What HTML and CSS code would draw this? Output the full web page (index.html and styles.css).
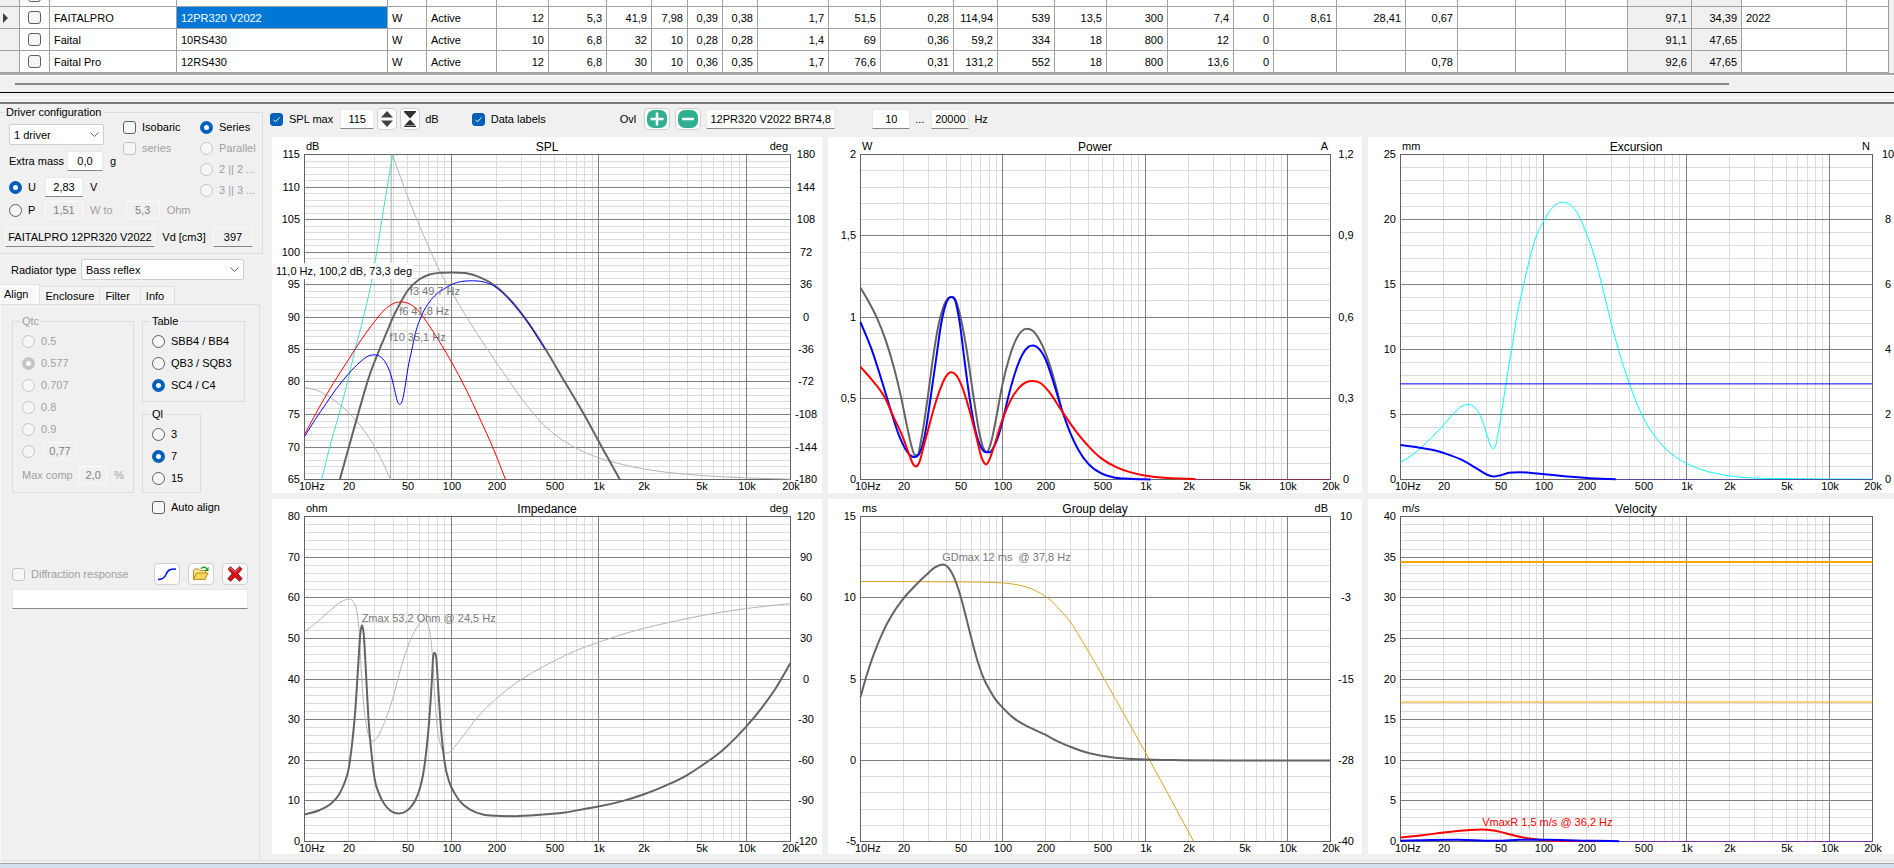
FILE: index.html
```html
<!DOCTYPE html>
<html lang="en">
<head>
    <meta charset="UTF-8">
    <meta name="viewport" content="width=device-width, initial-scale=1.0">
    <title>Speaker Box Simulator</title>
    <link rel="stylesheet" href="styles.css">
</head>
<body>

    <div class="driver-list">
        <table class="drivers">
            <colgroup id="driver-cols"><col><col><col><col><col><col><col><col><col><col><col><col><col><col><col><col><col><col><col><col><col><col><col><col><col><col><col><col><col><col><col></colgroup>
            <tbody id="driver-rows"></tbody>
        </table>
    </div>
    <div class="scroll-track"><div class="scroll-thumb"></div></div>
    <div class="splitter"></div>

    <div class="workspace">
        <aside class="sidebar">
            <fieldset class="group driver-config">
                <legend>Driver configuration</legend>
                <div class="config-top">
                    <div class="config-left">
                        <select class="driver-count" aria-label="Number of drivers"><option>1 driver</option></select>
                        <div class="row">
                            <label for="extra-mass" class="mass-label">Extra mass</label>
                            <input type="text" class="field w36" id="extra-mass" value="0,0">
                            <span class="unit">g</span>
                        </div>
                        <div class="row">
                            <label class="choice up"><input type="radio" name="drive" checked>U</label>
                            <input type="text" class="field w38" aria-label="Voltage" value="2,83">
                            <span class="unit">V</span>
                        </div>
                    </div>
                    <div class="stack config-mid">
                        <label class="choice"><input type="checkbox">Isobaric</label>
                        <label class="choice off"><input type="checkbox" disabled>series</label>
                    </div>
                    <div class="stack">
                        <label class="choice"><input type="radio" name="wiring" checked>Series</label>
                        <label class="choice off"><input type="radio" name="wiring" disabled>Parallel</label>
                        <label class="choice off"><input type="radio" name="wiring" disabled>2 || 2 ...</label>
                        <label class="choice off"><input type="radio" name="wiring" disabled>3 || 3 ...</label>
                    </div>
                </div>
                <div class="row power-row">
                    <label class="choice up"><input type="radio" name="drive">P</label>
                    <input type="text" class="field w38" id="power" aria-label="Power" value="1,51" disabled>
                    <label for="ohm" class="unit off">W to</label>
                    <input type="text" class="field w34 ohm" id="ohm" value="5,3" disabled>
                    <span class="unit off">Ohm</span>
                </div>
                <div class="row name-row">
                    <input type="text" class="field name" aria-label="Driver name" value="FAITALPRO 12PR320 V2022" readonly>
                    <label for="vd">Vd [cm3]</label>
                    <input type="text" class="field w40" id="vd" value="397" readonly>
                </div>
            </fieldset>

            <div class="row radiator">
                <label for="radiator">Radiator type</label>
                <select id="radiator"><option>Bass reflex</option></select>
            </div>

            <div class="tabs" role="tablist">
                <button class="tab active" role="tab">Align</button>
                <button class="tab" role="tab">Enclosure</button>
                <button class="tab" role="tab">Filter</button>
                <button class="tab" role="tab">Info</button>
            </div>
            <div class="tab-page">
                <div class="align-groups">
                    <fieldset class="group qtc" disabled>
                        <legend>Qtc</legend>
                        <label class="choice"><input type="radio" name="qtc">0.5</label>
                        <label class="choice"><input type="radio" name="qtc" checked>0.577</label>
                        <label class="choice"><input type="radio" name="qtc">0.707</label>
                        <label class="choice"><input type="radio" name="qtc">0.8</label>
                        <label class="choice"><input type="radio" name="qtc">0.9</label>
                        <div class="row">
                            <input type="radio" name="qtc" aria-label="Custom Qtc">
                            <input type="text" class="field w34 custom" aria-label="Custom Qtc value" value="0,77">
                        </div>
                        <div class="row max-comp">
                            <label for="max-comp">Max comp</label>
                            <input type="text" class="field w28" id="max-comp" value="2,0">
                            <span class="unit">%</span>
                        </div>
                    </fieldset>
                    <div class="align-right">
                        <fieldset class="group">
                            <legend>Table</legend>
                            <label class="choice"><input type="radio" name="table">SBB4 / BB4</label>
                            <label class="choice"><input type="radio" name="table">QB3 / SQB3</label>
                            <label class="choice"><input type="radio" name="table" checked>SC4 / C4</label>
                        </fieldset>
                        <fieldset class="group ql">
                            <legend>Ql</legend>
                            <label class="choice"><input type="radio" name="ql">3</label>
                            <label class="choice"><input type="radio" name="ql" checked>7</label>
                            <label class="choice"><input type="radio" name="ql">15</label>
                        </fieldset>
                        <label class="choice auto-align"><input type="checkbox">Auto align</label>
                    </div>
                </div>

                <div class="row diffraction">
                    <label class="choice off"><input type="checkbox" disabled>Diffraction response</label>
                    <button class="tool" aria-label="Draw curve">
                        <svg width="20" height="14" viewBox="0 0 20 14"><path d="M1 12.5C5 12.5 7.500 11 9 7.500C10.500 3.500 12 2 19 2" fill="none" stroke="#0010ff" stroke-width="1.600"/></svg>
                    </button>
                    <button class="tool" aria-label="Open file">
                        <svg width="18" height="16" viewBox="0 0 18 16">
                            <path d="M1.500 13.500V4.500L3 3H6.500L8 4.500H13.500V7" fill="#fbe58a" stroke="#b8901c"/>
                            <path d="M1.500 13.500L4.500 7H16L13 13.500Z" fill="#f7d65a" stroke="#b8901c"/>
                            <path d="M9 2.800C10.500 .8 13 .8 14.500 2.500" fill="none" stroke="#1a9a2a" stroke-width="1.400"/>
                            <path d="M16.500 .8V5H12.500Z" fill="#1a9a2a"/>
                        </svg>
                    </button>
                    <button class="tool" aria-label="Remove">
                        <svg width="16" height="16" viewBox="0 0 16 16">
                            <path d="M1 3L3.500 .7L8 4.800L12.500 .7L15 3L11 7.800L15.200 12.800L12.500 15.300L8 11L3.500 15.300L.8 12.800L5 7.800Z" fill="#d4141c" stroke="#8c1010" stroke-width=".8"/>
                            <path d="M2.300 3L3.500 2L8 6L12.500 2" fill="none" stroke="#f0787c"/>
                        </svg>
                    </button>
                </div>
                <input type="text" class="field file-name" aria-label="Diffraction file">
            </div>
        </aside>

        <main class="graphs">
            <div class="toolbar">
                <label class="choice"><input type="checkbox" checked>SPL max</label>
                <input type="text" class="field w34 spl-value" aria-label="SPL max value" value="115">
                <button class="tool slim" aria-label="Expand scale">
                    <svg width="14" height="18" viewBox="0 0 14 18"><path d="M7 1L13 7.500H1ZM7 17L13 10.500H1Z" fill="#404040"/></svg>
                </button>
                <button class="tool slim" aria-label="Compress scale">
                    <svg width="14" height="18" viewBox="0 0 14 18"><path d="M1 2H13L7 8.500ZM1 16H13L7 9.500ZM1 1H13V2.500H1ZM1 15.500H13V17H1Z" fill="#303030"/></svg>
                </button>
                <span class="db">dB</span>
                <label class="choice data-labels"><input type="checkbox" checked>Data labels</label>
                <label for="overlay" class="ovl">Ovl</label>
                <button class="tool" aria-label="Add overlay">
                    <svg width="20" height="18" viewBox="0 0 20 18"><rect width="20" height="18" rx="7" fill="#30b090"/><path d="M10 2.500V15.500M3.500 9H16.500" stroke="#fff" stroke-width="2.500"/></svg>
                </button>
                <button class="tool" aria-label="Remove overlay">
                    <svg width="20" height="18" viewBox="0 0 20 18"><rect width="20" height="18" rx="7" fill="#30b090"/><path d="M4 9H16" stroke="#fff" stroke-width="2.500"/></svg>
                </button>
                <input type="text" class="field overlay" id="overlay" value="12PR320 V2022 BR74,8">
                <input type="text" class="field w38 freq-from" aria-label="From frequency" value="10">
                <span>...</span>
                <input type="text" class="field w38 freq-to" aria-label="To frequency" value="20000">
                <span>Hz</span>
            </div>
            <div class="charts">
                <div class="chart" id="spl"></div>
                <div class="chart" id="power-chart"></div>
                <div class="chart" id="excursion"></div>
                <div class="chart" id="impedance"></div>
                <div class="chart" id="delay"></div>
                <div class="chart" id="velocity"></div>
            </div>
        </main>
    </div>
    <div class="status-edge"></div>

    <script src="script.js"></script>
</body>
</html>
```
FILE: styles.css
```css
* {
    box-sizing: border-box;
}

body {
    margin: 0;
    height: 100vh;
    overflow: hidden;
    display: flex;
    flex-direction: column;
    background-color: #f0f0f0;
    color: #000;
    font-family: "Liberation Sans", Arial, sans-serif;
    font-size: 11px;
    line-height: 14px;
}

input, select, button {
    font: inherit;
    color: inherit;
    margin: 0;
}

/* driver table */
.driver-list {
    height: 75px;
    flex: none;
    overflow: hidden;
    display: flex;
    align-items: flex-end;
    padding-right: 5px;
    border-bottom: 2px solid #a8a8a8;
}

.drivers {
    width: 100%;
    table-layout: fixed;
    border-collapse: separate;
    border-spacing: 0;
    background-color: #fff;
}

.drivers td {
    height: 22px;
    padding: 0 4px;
    border-right: 1px solid #a0a0a0;
    border-bottom: 1px solid #a0a0a0;
    white-space: nowrap;
    overflow: hidden;
}

.drivers td.num { text-align: right; }
.drivers td.calc { background-color: #f0f0f0; }
.drivers td.marker { background-color: #f0f0f0; padding: 0 3px; }
.drivers td.tick { padding: 0 8px; }
.drivers td.selected { background-color: #0078d7; color: #fff; }
.drivers input, .drivers svg { display: block; }

#driver-cols col { width: 52px; }
#driver-cols col:nth-child(1) { width: 20px; }
#driver-cols col:nth-child(2) { width: 30px; }
#driver-cols col:nth-child(3) { width: 127px; }
#driver-cols col:nth-child(4) { width: 211px; }
#driver-cols col:nth-child(5) { width: 39px; }
#driver-cols col:nth-child(6) { width: 70px; }
#driver-cols col:nth-child(8) { width: 58px; }
#driver-cols col:nth-child(9) { width: 45px; }
#driver-cols col:nth-child(10) { width: 36px; }
#driver-cols col:nth-child(11) { width: 35px; }
#driver-cols col:nth-child(12) { width: 35px; }
#driver-cols col:nth-child(13) { width: 71px; }
#driver-cols col:nth-child(15) { width: 73px; }
#driver-cols col:nth-child(16) { width: 44px; }
#driver-cols col:nth-child(17) { width: 57px; }
#driver-cols col:nth-child(19) { width: 61px; }
#driver-cols col:nth-child(20) { width: 66px; }
#driver-cols col:nth-child(21) { width: 40px; }
#driver-cols col:nth-child(22) { width: 63px; }
#driver-cols col:nth-child(23) { width: 69px; }
#driver-cols col:nth-child(25) { width: 58px; }
#driver-cols col:nth-child(26) { width: 50px; }
#driver-cols col:nth-child(27) { width: 62px; }
#driver-cols col:nth-child(28) { width: 64px; }
#driver-cols col:nth-child(29) { width: 50px; }
#driver-cols col:nth-child(30) { width: 105px; }
#driver-cols col:nth-child(31) { width: 42px; }

.scroll-track {
    flex: none;
    height: 17px;
    padding: 7px 165px 0 15px;
    border-top: 1px solid #fff;
}

.scroll-thumb {
    height: 2px;
    background-color: #868686;
}

.splitter {
    flex: none;
    height: 12px;
    border-top: 1px solid #000;
    border-bottom: 2px solid #7a7a7a;
    background: linear-gradient(#fff, #fff) 0 4px / 100% 1px no-repeat;
}

/* controls */
input[type="checkbox"],
input[type="radio"] {
    appearance: none;
    flex: none;
    width: 13px;
    height: 13px;
    border: 1px solid #5f5f5f;
    border-radius: 3px;
    background-color: #f6f6f6;
}

input[type="radio"] { border-radius: 50%; }

input[type="checkbox"]:checked {
    border-color: #005fb8;
    background: #005fb8 url("data:image/svg+xml,%3Csvg xmlns='http://www.w3.org/2000/svg' viewBox='0 0 11 11'%3E%3Cpath d='M2.500 5.800L4.500 7.800L8.500 3.500' fill='none' stroke='white'/%3E%3C/svg%3E");
}

input[type="radio"]:checked {
    border: 4px solid #005fb8;
    background-color: #fff;
}

input[type="checkbox"]:disabled,
input[type="radio"]:disabled { border-color: #c4c4c4; }

.choice {
    display: flex;
    align-items: center;
    gap: 6px;
    height: 14px;
    white-space: nowrap;
}

.row {
    display: flex;
    align-items: center;
}

.off, .qtc { color: #a0a0a0; }

.field {
    height: 20px;
    padding: 0 2px;
    text-align: center;
    border: 1px solid #e8e8e8;
    border-bottom-color: #868686;
    border-radius: 1px;
    background-color: #fff;
    outline: none;
}

.field[readonly] { background-color: #f0f0f0; border-color: #fafafa #fafafa #868686; }
.field:disabled { height: 18px; background-color: #f0f0f0; border-color: #fafafa; color: #808080; }

.w28 { width: 28px; }
.w34 { width: 34px; }
.w36 { width: 36px; }
.w38 { width: 38px; }
.w40 { width: 40px; }

select {
    appearance: none;
    height: 21px;
    padding: 0 20px 0 4px;
    border: 1px solid #cfcfcf;
    border-radius: 2px;
    background: #fff url("data:image/svg+xml,%3Csvg xmlns='http://www.w3.org/2000/svg' width='9' height='6'%3E%3Cpath d='M.5 .5L4.500 4.500L8.500 .5' fill='none' stroke='%23606060'/%3E%3C/svg%3E") right 4px center no-repeat;
}

.tool {
    flex: none;
    display: flex;
    align-items: center;
    justify-content: center;
    width: 26px;
    height: 22px;
    padding: 0;
    border: 1px solid #d0d0d0;
    border-radius: 4px;
    background-color: #fdfdfd;
}

.tool.slim { width: 20px; }

.group {
    min-width: 0;
    margin: 0;
    padding: 1px 9px 0;
    border: 1px solid #dcdcdc;
}

.group legend {
    height: 16px;
    margin-left: -2px;
    padding: 0 2px;
    line-height: 16px;
}

/* layout */
.workspace {
    flex: 1;
    min-height: 0;
    display: flex;
}

.sidebar {
    flex: none;
    width: 265px;
    display: flex;
    flex-direction: column;
    padding-right: 2px;
}

.driver-config {
    height: 150px;
    border-left: 0;
    padding: 0 9px 0 5px;
}

.driver-config legend { margin-left: -1px; }

.config-top {
    display: flex;
    padding-left: 4px;
}

.config-left {
    flex: none;
    width: 114px;
    padding-top: 4px;
    display: flex;
    flex-direction: column;
    gap: 6px;
}

.driver-count { width: 95px; }
.mass-label { width: 58px; }
.unit { margin-left: 7px; }
.up { width: 36px; }

.stack {
    flex: none;
    display: flex;
    flex-direction: column;
    gap: 7px;
}

.config-mid { width: 77px; }

.power-row {
    margin-top: 4px;
    padding-left: 4px;
}

.ohm { margin-left: 13px; }

.name-row {
    margin-top: 8px;
    justify-content: space-between;
}

.name { width: 150px; padding: 0; }

.radiator {
    margin-top: 5px;
    padding-left: 11px;
}

.radiator label { width: 70px; }
.radiator select { width: 163px; }

.tabs {
    display: flex;
    align-items: flex-end;
    margin-top: 4px;
}

.tab {
    height: 18px;
    padding: 0 5px;
    border: 1px solid #e0e0e0;
    border-bottom: 0;
    border-left: 0;
    background-color: #f3f3f3;
}

.tab:nth-child(n+3) { padding: 0 10px 0 5px; }

.tab.active {
    height: 20px;
    padding: 0 11px 2px 4px;
    background-color: #fafafa;
}

.tab-page {
    flex: 1;
    margin-right: 3px;
    padding: 8px 11px 0;
    border: 1px solid #dedede;
    border-left-color: #fafafa;
    border-bottom: 0;
}

.align-groups {
    display: flex;
    gap: 8px;
}

.qtc { width: 122px; height: 180px; }

.group > .choice { height: 22px; }
.qtc .row { height: 22px; }
.custom { margin-left: 8px; }
.qtc .max-comp { margin-top: 2px; }
.max-comp label { width: 58px; }

.align-right {
    display: flex;
    flex-direction: column;
    align-items: flex-start;
}

.align-right .group { width: 103px; height: 89px; }
.align-right .ql { width: 59px; margin-top: 4px; height: 87px; }
.auto-align { margin: 7px 0 0 10px; }

.diffraction {
    margin-top: 49px;
    gap: 8px;
}

.diffraction .choice { flex: 1; }
.file-name { width: 100%; margin-top: 4px; }

.graphs {
    flex: 1;
    min-width: 0;
    display: flex;
    flex-direction: column;
}

.toolbar {
    flex: none;
    height: 33px;
    padding: 0 0 3px 5px;
    display: flex;
    align-items: center;
    gap: 5px;
    white-space: nowrap;
}

.spl-value { margin-left: 2px; }
.slim { margin-left: -2px; }
.data-labels { margin-left: 28px; }
.ovl { margin-left: 69px; margin-right: 3px; }
.overlay { width: 129px; }
.freq-from { margin-left: 32px; }
.freq-to { margin-left: 2px; }

.charts {
    flex: 1;
    min-height: 0;
    display: grid;
    grid-template-columns: 550fr 534fr 536fr;
    grid-template-rows: 1fr 1fr;
    gap: 6px;
    margin: 0 -10px 6px 7px;
}

.chart {
    min-width: 0;
    min-height: 0;
    overflow: hidden;
    background-color: #fff;
}

.chart svg { display: block; }
.chart text { font-size: 11px; }
.chart .title { font-size: 12px; }
.minor { stroke: #dcdcdc; shape-rendering: crispEdges; }
.major { stroke: #808080; shape-rendering: crispEdges; }
.frame { fill: none; stroke: #646464; shape-rendering: crispEdges; }
.curve { fill: none; stroke-linejoin: round; }
.end { text-anchor: end; }
.mid { text-anchor: middle; }

.status-edge {
    flex: none;
    height: 8px;
    border-top: 1px solid #e0e0e0;
    background: linear-gradient(#f0f0f0 2px, #a0a8b0 2px, #a0a8b0 3px, #d3dfea 3px);
}
```
FILE: script.js
```js
const drivers = [
    ['', '', '', '', '', '', '', '', '', '', '', '', '', '', '', '', '', '', '', '', '', '', '', '', '', '', '', '', ''],
    ['FAITALPRO', '12PR320 V2022', 'W', 'Active', '12', '5,3', '41,9', '7,98', '0,39', '0,38', '1,7', '51,5', '0,28', '114,94', '539', '13,5', '300', '7,4', '0', '8,61', '28,41', '0,67', '', '', '', '97,1', '34,39', '2022', ''],
    ['Faital', '10RS430', 'W', 'Active', '10', '6,8', '32', '10', '0,28', '0,28', '1,4', '69', '0,36', '59,2', '334', '18', '800', '12', '0', '', '', '', '', '', '', '91,1', '47,65', '', ''],
    ['Faital Pro', '12RS430', 'W', 'Active', '12', '6,8', '30', '10', '0,36', '0,35', '1,7', '76,6', '0,31', '131,2', '552', '18', '800', '13,6', '0', '', '', '0,78', '', '', '', '92,6', '47,65', '', '']
];
const current = 1;

document.getElementById('driver-rows').innerHTML = drivers.map((row, r) => {
    const marker = r === current ? '<svg width="6" height="10"><path d="M0 0L5 5L0 10Z" fill="#404040"/></svg>' : '';
    const cells = row.map((text, c) => {
        let cls = c > 3 && c < 27 ? 'num' : '';
        if (c === 25 || c === 26) cls += ' calc';
        if (r === current && c === 1) cls = 'selected';
        return `<td class="${cls}">${text}</td>`;
    }).join('');
    return `<tr><td class="marker">${marker}</td><td class="tick"><input type="checkbox" aria-label="Mark driver"></td>${cells}</tr>`;
}).join('');

// Curve points are given in the units of each chart's frame: [left, top, right, bottom]
const charts = {
    'spl': {
        title: 'SPL', units: ['dB', 'deg'], frame: [110, 164, 1471, 1134],
        left: [115, 110, 105, 100, 95, 90, 85, 80, 75, 70, 65],
        right: [180, 144, 108, 72, 36, 0, -36, -72, -108, -144, -180],
        curves: [
            ['#b4b4b4', 1, '110,859 150,870 190,895 234,935 275,985 306,1036 330,1085 351,1134'],
            ['#a8a8a8', 1, '351,1134 353,164'],
            ['#b4b4b4', 1, '356,164 385,250 420,346 460,445 490,515 522,574 560,642 625,750 683,840 720,895 770,960 811,1000 870,1040 933,1069 1000,1089 1057,1102 1129,1113 1222,1122 1345,1129 1471,1133'],
            ['#40e0d0', 1, '158,1134 185,1020 213,915 232,835 253,740 275,650 300,530 316,430 331,330 345,240 353,190 360,164'],
            ['#646464', 2, '209,1134 234,1038 265,920 290,830 318,751 340,695 360,645 377,610 399,570 430,538 460,522 490,517 522,516 560,518 600,530 640,553 663,573 692,605 730,656 785,745 838,841 893,940 942,1036 993,1134'],
            ['#0000ff', 1, '110,1006 140,955 170,908 200,862 234,818 265,784 290,765 304,762 320,766 338,787 352,822 362,865 370,900 377,910 384,898 392,855 400,800 410,750 420,700 440,640 460,604 480,580 500,566 522,552 550,543 580,541 610,544 640,556 661,573 690,604 728,654 783,744'],
            ['#ff0000', 1, '110,1000 150,921 190,848 234,775 270,715 306,663 330,632 355,611 377,604 400,608 425,626 460,676 490,726 522,784 560,860 600,950 640,1045 673,1134']
        ],
        notes: [['f3 49,7 Hz', 405, 582, '#787878'], ['f6 41,8 Hz', 375, 642, '#787878'], ['f10 35,1 Hz', 348, 720, '#787878']],
        cursor: ['11,0 Hz, 100,2 dB, 73,3 deg', 30, 524]
    },
    'power-chart': {
        title: 'Power', units: ['W', 'A'], frame: [118, 164, 1482, 1134],
        left: ['2', '1,5', '1', '0,5', '0'], right: ['1,2', '0,9', '0,6', '0,3', '0'],
        curves: [
            ['#646464', 2, '118,562 140,600 165,650 190,715 215,800 234,880 250,960 265,1030 275,1060 283,1061 295,1010 313,890 330,760 345,670 360,615 372,593 383,589 393,597 405,635 425,740 445,880 462,990 475,1042 485,1052 495,1030 510,960 530,850 550,770 570,715 585,692 600,684 618,690 640,722 665,785 690,875 700,918'],
            ['#0000ff', 2, '118,664 150,745 180,840 205,925 230,1003 250,1046 262,1062 275,1067 288,1058 305,1000 320,900 338,770 352,670 364,615 375,592 383,589 393,600 405,660 420,780 436,900 452,990 468,1038 480,1052 493,1053 505,1037 518,1005 530,960 550,875 570,805 590,757 605,738 618,734 632,740 655,775 680,850 700,918 725,990 750,1045 780,1088 817,1116 850,1127 900,1132 960,1134'],
            ['#ff0000', 2, '118,798 150,835 190,892 215,950 240,1005 260,1062 272,1090 279,1095 287,1087 300,1040 313,990 330,925 350,862 365,828 381,814 395,822 410,850 435,930 455,1010 470,1070 483,1089 492,1075 505,1037 530,955 555,895 580,858 600,843 617,840 640,846 665,872 695,918 727,967 780,1035 817,1071 860,1097 900,1112 942,1122 1000,1129 1070,1132 1090,1133'],
            ['#803048', 1, '1090,1134 1482,1134']
        ]
    },
    'excursion': {
        title: 'Excursion', units: ['mm', 'N'], frame: [135, 73, 1505, 1045],
        left: [25, 20, 15, 10, 5, 0], right: [10, 8, 6, 4, 2, 0],
        curves: [
            ['#00ffff', 1, '135,993 165,975 200,945 260,882 290,847 310,828 331,820 350,829 370,862 387,915 397,945 405,953 412,940 422,885 435,800 447,720 460,640 472,560 492,465 510,385 530,315 548,277 570,240 590,220 605,216 622,220 645,243 675,310 700,385 720,465 747,578 770,665 800,760 837,855 870,911 900,948 930,975 963,996 1010,1016 1090,1034 1215,1042 1505,1044'],
            ['#0000ff', 1, '135,759 1505,759'],
            ['#0000ff', 2, '135,942 180,948 230,957 270,969 310,985 340,1002 365,1018 385,1030 405,1036 425,1032 450,1025 480,1023 520,1026 560,1030 630,1037 700,1042 760,1044'],
            ['#5050a0', 1, '760,1045 1505,1045']
        ]
    },
    'impedance': {
        title: 'Impedance', units: ['ohm', 'deg'], frame: [110, 76, 1471, 1050],
        left: [80, 70, 60, 50, 40, 30, 20, 10, 0], right: [120, 90, 60, 30, 0, -30, -60, -90, -120],
        curves: [
            ['#b4b4b4', 1, '110,422 150,388 190,350 215,330 234,324 248,333 258,370 263,420 268,520 275,630 283,700 292,740 303,749 315,737 335,690 357,622 380,530 405,450 430,400 445,385 455,395 462,430 468,490 474,600 480,690 490,755 500,782 512,785 525,772 550,740 600,670 645,624 683,590 722,561 770,531 811,508 870,478 933,453 1057,412 1129,394 1222,373 1345,352 1471,337'],
            ['#646464', 2, '110,969 150,957 180,940 205,912 220,880 234,830 243,760 252,660 260,530 266,430 271,402 276,430 282,540 289,680 298,790 306,860 320,910 335,940 350,957 362,964 375,966 390,962 405,950 420,927 432,895 442,850 451,780 459,690 466,580 470,500 474,484 479,500 485,600 493,720 502,810 515,870 530,905 550,935 575,955 610,969 645,973 700,974 770,970 840,963 900,951 933,945 1000,929 1057,910 1129,879 1183,850 1222,823 1280,777 1345,708 1390,650 1430,590 1471,515']
        ],
        notes: [['Zmax 53,2 Ohm @ 24,5 Hz', 270, 392, '#787878']]
    },
    'delay': {
        title: 'Group delay', units: ['ms', 'dB'], frame: [118, 76, 1482, 1050],
        left: [15, 10, 5, 0, -5], right: [10, -3, -15, -28, -40],
        curves: [
            ['#daa520', 1, '118,271 400,272 480,273 530,275 575,281 610,291 640,306 664,322 700,359 727,392 755,438 780,481 820,553 852,612 900,700 942,778 957,806 1085,1050'],
            ['#646464', 2, '118,617 135,555 155,493 180,429 210,370 240,325 275,285 310,250 335,228 357,220 372,228 390,260 405,303 420,360 437,430 455,500 475,560 495,600 510,625 530,648 560,678 590,698 625,716 654,730 690,750 727,766 780,785 817,793 852,798 910,803 1020,806 1200,807 1482,807']
        ],
        notes: [['GDmax 12 ms  @ 37,8 Hz', 355, 210, '#787878']]
    },
    'velocity': {
        title: 'Velocity', units: ['m/s', ''], frame: [135, 76, 1505, 1050],
        left: [40, 35, 30, 25, 20, 15, 10, 5, 0], right: [],
        curves: [
            ['#ffa500', 2, '135,212 1505,212'],
            ['#ffa500', 1, '135,632 1505,632'],
            ['#ff0000', 2, '135,1038 200,1031 260,1023 330,1016 370,1014 405,1017 440,1025 480,1036 515,1042 550,1046 600,1048 700,1049'],
            ['#0000ff', 2, '135,1048 200,1046 300,1045 350,1046 390,1048 430,1048 480,1045 560,1045 700,1048 770,1049'],
            ['#7030a0', 1, '770,1050 1505,1050']
        ],
        notes: [['VmaxR 1,5 m/s @ 36,2 Hz', 372, 1005, '#ff0000']]
    }
};

const freqLabels = { 20: '20', 50: '50', 100: '100', 200: '200', 500: '500', 1000: '1k', 2000: '2k', 5000: '5k', 10000: '10k', 20000: '20k' };

// Cubic through the points, with flat tangents at the peaks so they never overshoot
function smoothPath(p) {
    const n = p.length;
    const h = [], d = [];
    for (let i = 0; i < n - 1; i++) {
        h.push(p[i + 1][0] - p[i][0]);
        d.push((p[i + 1][1] - p[i][1]) / h[i]);
    }
    const m = p.map((_, i) => {
        if (i === 0) return d[0];
        if (i === n - 1) return d[n - 2];
        if (d[i - 1] * d[i] <= 0) return 0;
        const t = (d[i - 1] * h[i] + d[i] * h[i - 1]) / (h[i - 1] + h[i]);
        const limit = 3 * Math.min(Math.abs(d[i - 1]), Math.abs(d[i]));
        return Math.sign(t) * Math.min(Math.abs(t), limit);
    });
    let path = `M${p[0][0]} ${p[0][1]}`;
    for (let i = 0; i < n - 1; i++) {
        const s = h[i] / 3;
        path += `C${p[i][0] + s} ${p[i][1] + m[i] * s} ${p[i + 1][0] - s} ${p[i + 1][1] - m[i + 1] * s} ${p[i + 1][0]} ${p[i + 1][1]}`;
    }
    return path;
}

function drawChart(id, chart) {
    const box = document.getElementById(id);
    const w = box.clientWidth;
    const h = box.clientHeight;
    const x0 = 32, y0 = 17, x1 = w - 32, y1 = h - 14;
    const [fl, ft, fr, fb] = chart.frame;
    const sx = x => x0 + 0.5 + (x - fl) / (fr - fl) * (x1 - x0);
    const sy = y => y0 + 0.5 + (y - ft) / (fb - ft) * (y1 - y0);
    const fx = f => Math.round(x0 + Math.log10(f / 10) / Math.log10(2000) * (x1 - x0)) + 0.5;
    const line = (cls, a, b, c, d) => `<path class="${cls}" d="M${a} ${b}L${c} ${d}"/>`;
    let minor = '', major = '', labels = '';

    for (let decade = 10; decade <= 10000; decade *= 10) {
        for (let k = 1; k < 10 && k * decade < 20000; k++) {
            const x = fx(k * decade);
            if (k === 1) major += line('major', x, y0, x, y1);
            else minor += line('minor', x, y0, x, y1);
        }
    }

    const steps = chart.left.length - 1;
    for (let i = 0; i <= steps * 5; i++) {
        const y = Math.round(y0 + i / (steps * 5) * (y1 - y0)) + 0.5;
        if (i % 5) {
            minor += line('minor', x0, y, x1, y);
            continue;
        }
        major += line('major', x0, y, x1, y);
        labels += `<text class="end" x="${x0 - 4}" y="${y + 3.5}">${chart.left[i / 5]}</text>`;
        if (chart.right.length) {
            labels += `<text class="mid" x="${x1 + 16}" y="${y + 3.5}">${chart.right[i / 5]}</text>`;
        }
    }

    labels += `<text x="${x0 - 5}" y="${y1 + 11}">10Hz</text>`;
    for (const f in freqLabels) {
        labels += `<text class="mid" x="${fx(f) + 0.5}" y="${y1 + 11}">${freqLabels[f]}</text>`;
    }
    labels += `<text x="${x0 + 2}" y="${y0 - 4}">${chart.units[0]}</text>`;
    labels += `<text class="end" x="${x1 - 2}" y="${y0 - 4}">${chart.units[1]}</text>`;
    labels += `<text class="mid title" x="${(x0 + x1) / 2}" y="${y0 - 3}">${chart.title}</text>`;

    const curves = chart.curves.map(([color, width, points]) => {
        const p = points.split(' ').map(s => s.split(',').map(Number)).map(([x, y]) => [sx(x), sy(y)]);
        return `<path class="curve" stroke="${color}" stroke-width="${width}" d="${smoothPath(p)}"/>`;
    }).join('');

    let notes = (chart.notes || []).map(([text, x, y, color]) =>
        `<text xml:space="preserve" x="${sx(x)}" y="${sy(y)}" fill="${color}">${text}</text>`).join('');
    if (chart.cursor) {
        const [text, x, y] = chart.cursor;
        notes += `<rect x="${sx(x) - 1}" y="${sy(y) - 12}" width="138" height="16" fill="#fff"/>`;
        notes += `<text x="${sx(x)}" y="${sy(y)}">${text}</text>`;
    }

    box.innerHTML = `<svg width="${w}" height="${h}">${minor}${major}
        <rect class="frame" x="${x0 + 0.5}" y="${y0 + 0.5}" width="${x1 - x0}" height="${y1 - y0}"/>
        ${labels}${curves}${notes}</svg>`;
}

function drawAll() {
    for (const id in charts) drawChart(id, charts[id]);
}

window.addEventListener('resize', drawAll);
drawAll();
```
